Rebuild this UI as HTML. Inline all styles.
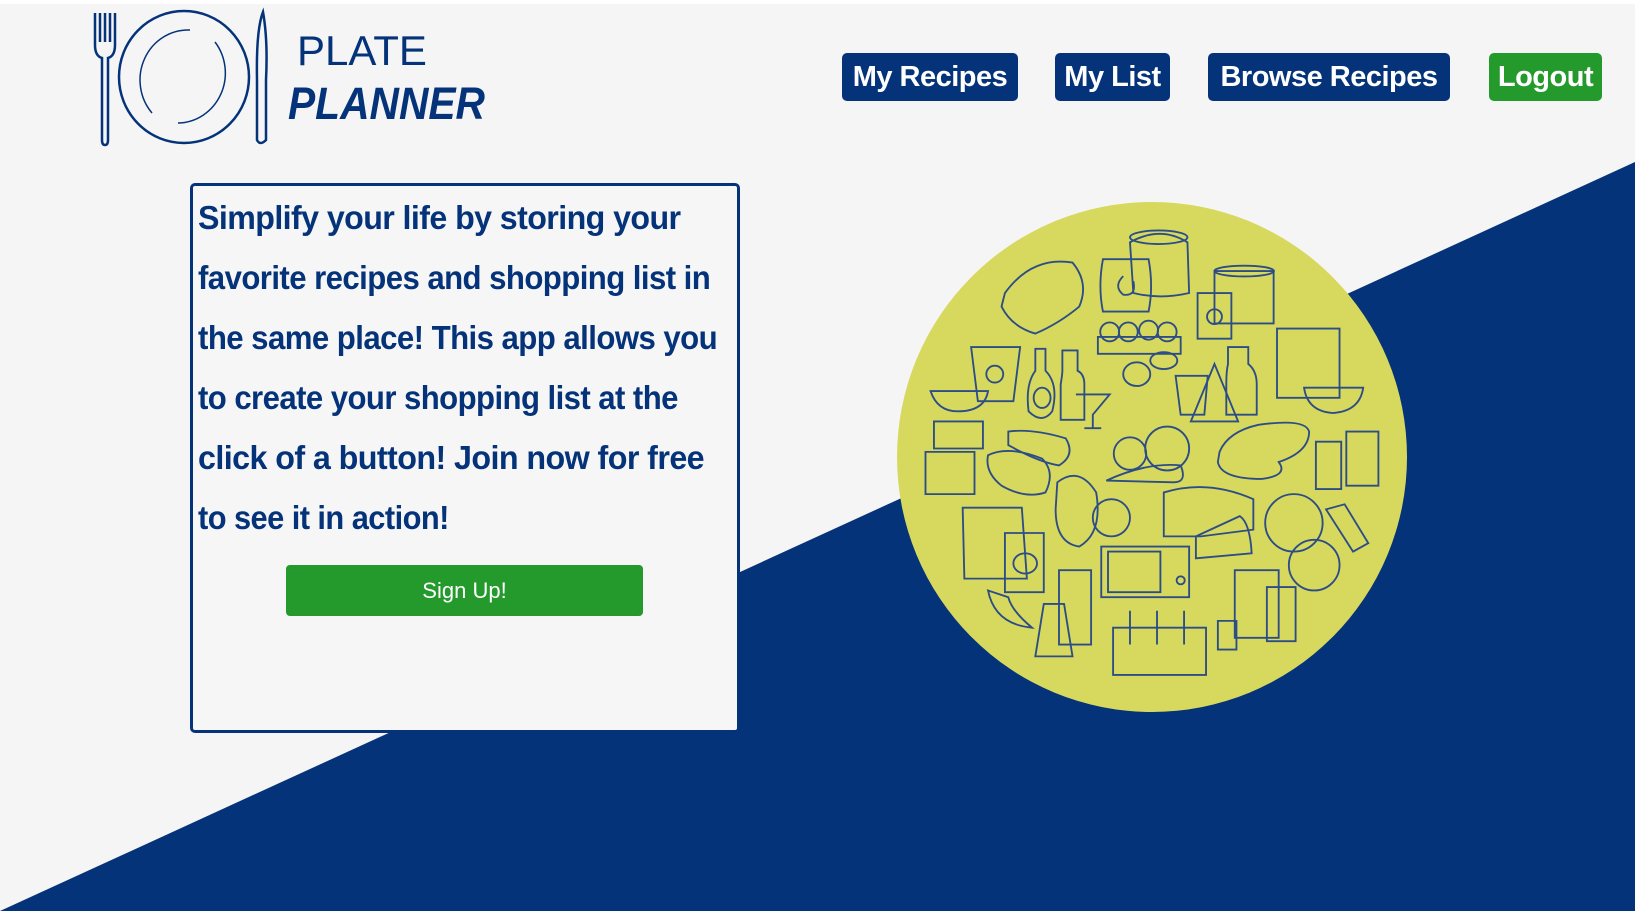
<!DOCTYPE html>
<html><head><meta charset="utf-8"><style>
html,body{margin:0;padding:0}
body{width:1635px;height:911px;position:relative;overflow:hidden;background:#f5f5f5;font-family:"Liberation Sans",sans-serif}
.top{position:absolute;left:0;top:0;width:1635px;height:4px;background:#fff}
.bg{position:absolute;left:0;top:0}
.nav{position:absolute;top:53px;height:48px;border-radius:5px;background:#05337a;color:#fff;font-weight:bold;font-size:29px;line-height:48px;text-align:center;letter-spacing:-0.5px;white-space:nowrap}
.card{position:absolute;left:190px;top:183px;width:544px;height:544px;border:3px solid #05337a;border-radius:5px;background:#f6f6f6}
.ln{position:absolute;left:5px;color:#05337a;font-weight:bold;font-size:33px;white-space:nowrap;letter-spacing:-0.6px;transform-origin:0 0}
.btn{position:absolute;left:93px;top:379px;width:357px;height:51px;background:#239a2b;border-radius:4px;color:#fff;font-size:22px;line-height:51px;text-align:center}
</style></head><body>
<div class="top"></div>
<svg class="bg" width="1635" height="911"><polygon points="0,911 1635,162 1635,911" fill="#05337a"/></svg>

<!-- logo -->
<svg class="bg" width="520" height="160">
 <g fill="none" stroke="#05337a" stroke-width="2.5">
  <path d="M95,13 V45 Q95,56 102,58 V140 Q102,145 105,145 Q108,145 108,140 V58 Q115,56 115,45 V13"/>
  <path d="M100,13 V42 M105,13 V42 M110,13 V42"/>
  <ellipse cx="184" cy="77" rx="65" ry="66"/>
  <path d="M152,113 A48,50 0 0 1 190,30" stroke-width="1.5"/>
  <path d="M215,42 A48,50 0 0 1 178,123" stroke-width="1.5"/>
  <path d="M263,12 Q256,30 257,80 L257,140 Q260,146 266,140 L266,80 Q268,40 263,12Z"/>
 </g>
 <text x="297" y="65" font-family="Liberation Sans" font-size="42" fill="#05337a">PLATE</text>
 <text x="288" y="119" font-family="Liberation Sans" font-size="45" font-weight="bold" font-style="italic" fill="#05337a" textLength="197" lengthAdjust="spacingAndGlyphs">PLANNER</text>
</svg>

<div class="nav" style="left:842px;width:176px">My Recipes</div>
<div class="nav" style="left:1055px;width:115px">My List</div>
<div class="nav" style="left:1208px;width:242px">Browse Recipes</div>
<div class="nav" style="left:1489px;width:113px;background:#239a2b">Logout</div>

<div class="card">
 <div class="ln" style="top:13px;transform:scaleX(0.975)">Simplify your life by storing your</div>
 <div class="ln" style="top:73px;transform:scaleX(0.944)">favorite recipes and shopping list in</div>
 <div class="ln" style="top:133px;transform:scaleX(0.945)">the same place! This app allows you</div>
 <div class="ln" style="top:193px;transform:scaleX(0.943)">to create your shopping list at the</div>
 <div class="ln" style="top:253px;transform:scaleX(0.978)">click of a button! Join now for free</div>
 <div class="ln" style="top:313px;transform:scaleX(0.934)">to see it in action!</div>
 <div class="btn">Sign Up!</div>
</div>

<svg class="bg" width="1635" height="911">
 <circle cx="1152" cy="457" r="255" fill="#d7d95f"/>
 <g transform="translate(890,195) scale(0.338)" fill="none" stroke="#2d4d86" stroke-width="5.5">
  <path d="M710,140 Q800,90 880,140 L885,290 Q800,310 720,290Z"/><ellipse cx="795" cy="125" rx="85" ry="20"/>
  <path d="M630,190 H765 Q780,270 765,345 H630 Q615,270 630,190Z"/><path d="M690,240 Q660,270 690,295 Q730,300 720,255"/>
  <path d="M340,290 Q420,180 540,200 Q590,260 560,330 Q500,380 430,410 Q360,390 330,330Z"/>
  <path d="M960,225 H1135 V380 H960Z"/><ellipse cx="1048" cy="225" rx="88" ry="16"/>
  <path d="M910,290 H1010 V425 H910Z"/><circle cx="960" cy="360" r="22"/>
  <path d="M615,420 H860 V470 H615Z"/><circle cx="650" cy="405" r="28"/><circle cx="705" cy="405" r="28"/><circle cx="765" cy="400" r="28"/><circle cx="820" cy="405" r="28"/>
  <ellipse cx="810" cy="490" rx="40" ry="25"/><ellipse cx="730" cy="530" rx="40" ry="35"/>
  <path d="M240,450 H385 L365,610 H260Z"/><circle cx="310" cy="530" r="25"/>
  <path d="M120,580 H290 Q280,640 200,640 Q140,640 120,580Z"/>
  <path d="M430,455 V520 Q400,560 410,640 Q450,680 480,640 Q500,560 460,520 V455Z"/><ellipse cx="450" cy="600" rx="25" ry="30"/>
  <path d="M510,460 H555 V520 Q575,530 575,560 V665 H505 V560 Q510,530 510,520Z"/>
  <path d="M550,590 H650 L600,650 V690 M575,690 H625"/>
  <path d="M845,535 H940 L930,650 H860Z"/><path d="M960,500 L1030,670 H890Z"/>
  <path d="M1000,450 H1060 V500 Q1085,520 1085,560 V650 H995 V560 Q995,520 1000,500Z"/>
  <path d="M1145,395 H1330 V600 H1145Z"/><path d="M1225,570 H1400 Q1390,640 1310,645 Q1235,640 1225,570Z"/>
  <path d="M130,670 H275 V750 H130Z"/><path d="M105,760 H250 V885 H105Z"/>
  <path d="M290,770 Q350,740 450,780 Q490,820 460,880 Q400,900 330,860 Q280,820 290,770Z"/><path d="M350,700 Q420,690 520,720 Q550,770 500,800 Q440,790 350,740Z"/>
  <circle cx="710" cy="765" r="48"/><circle cx="820" cy="750" r="65"/>
  <path d="M640,845 Q760,790 860,800 Q880,850 840,850 Z"/>
  <path d="M975,760 Q1000,700 1090,680 Q1230,660 1240,700 Q1240,760 1150,790 Q1180,830 1100,840 Q980,840 970,790Z"/>
  <path d="M1260,730 H1335 V870 H1260Z"/><path d="M1350,700 H1445 V860 H1350Z"/>
  <path d="M495,850 Q560,800 610,880 Q630,1000 560,1040 Q490,1030 490,930Z"/><circle cx="655" cy="955" r="55"/>
  <path d="M810,880 Q940,840 1075,900 V990 L920,1010 H810Z"/><path d="M905,1010 L1035,950 Q1065,970 1070,1060 L905,1075Z"/>
  <circle cx="1195" cy="970" r="85"/><circle cx="1255" cy="1095" r="75"/><path d="M1290,930 L1345,915 L1415,1030 L1370,1055Z"/>
  <path d="M215,925 H390 L405,1135 H220Z"/><path d="M340,1000 H455 V1175 H340Z"/><ellipse cx="400" cy="1090" rx="35" ry="30"/>
  <path d="M625,1040 H885 V1190 H625Z"/><path d="M645,1055 H800 V1175 H645Z"/><circle cx="860" cy="1140" r="12"/>
  <path d="M290,1170 Q310,1270 420,1280 Q360,1230 350,1190Z"/>
  <path d="M500,1110 H595 V1330 H500Z"/><path d="M455,1210 H515 L540,1365 H430Z"/>
  <path d="M660,1280 H935 V1420 H660Z"/><path d="M710,1230 V1330 M790,1230 V1330 M870,1230 V1330"/>
  <path d="M1020,1110 H1150 V1310 H1020Z"/><path d="M1115,1160 H1200 V1320 H1115Z"/><path d="M970,1260 H1025 V1345 H970Z"/>
 </g>
</svg>
</body></html>
